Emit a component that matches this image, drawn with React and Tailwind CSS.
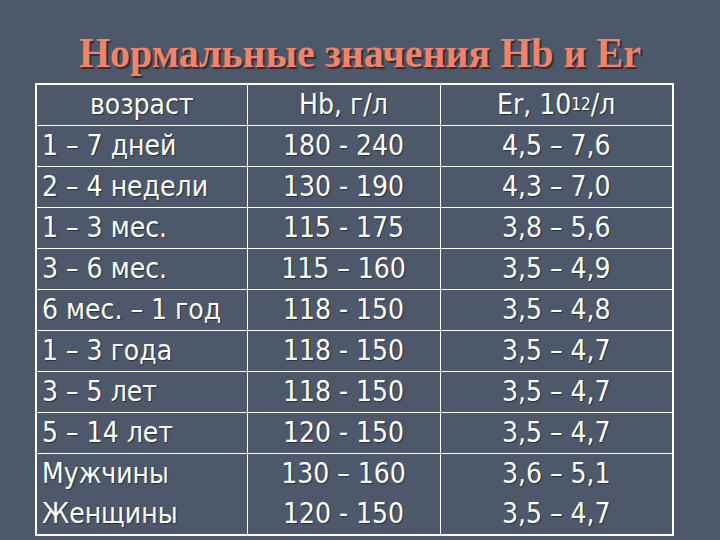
import React from "react";

const rows = [
  ["1 – 7 дней", "180 - 240", "4,5 – 7,6"],
  ["2 – 4 недели", "130 - 190", "4,3 – 7,0"],
  ["1 – 3 мес.", "115 - 175", "3,8 – 5,6"],
  ["3 – 6 мес.", "115 – 160", "3,5 – 4,9"],
  ["6 мес. – 1 год", "118 - 150", "3,5 – 4,8"],
  ["1 – 3 года", "118 - 150", "3,5 – 4,7"],
  ["3 – 5 лет", "118 - 150", "3,5 – 4,7"],
  ["5 – 14 лет", "120 - 150", "3,5 – 4,7"],
  ["Мужчины", "130 – 160", "3,6 – 5,1"],
  ["Женщины", "120 - 150", "3,5 – 4,7"],
];

export default function App() {
  const cell = "h-[41px] p-0 align-middle";
  return (
    <div className="w-[720px] h-[540px] bg-[#4d596b] overflow-hidden">
      {/* Title */}
      <div className="h-[83px] flex items-center justify-center pt-[22px]">
        <h1 className="font-['Liberation_Serif',serif] font-bold text-[40px] leading-none text-[#f2836b] scale-y-[1.08] [text-shadow:2px_2px_1px_#2e2e36]">
          Нормальные значения Hb и Er
        </h1>
      </div>

      {/* Table */}
      <div className="pl-[35px]">
        <table className="w-[637px] border-collapse border-2 border-white text-white font-['DejaVu_Sans_Condensed','DejaVu_Sans',sans-serif] text-[28px] leading-none [text-shadow:1px_1px_1px_#2a2f38] table-fixed">
          <colgroup>
            <col className="w-[211px]" />
            <col className="w-[193px]" />
            <col className="w-[233px]" />
          </colgroup>
          <thead>
            <tr className="border-b border-white">
              <th className={`${cell} font-normal text-center border-r border-white`}>возраст</th>
              <th className={`${cell} font-normal text-center border-r border-white`}>Hb, г/л</th>
              <th className={`${cell} font-normal text-center`}>
                Er, 10<sup className="text-[17px] relative -top-[4px]">12</sup>/л
              </th>
            </tr>
          </thead>
          <tbody>
            {rows.map((r, i) => (
              <tr key={i} className={i < 8 ? "border-b border-white" : ""}>
                <td className={`${cell} pl-[5px] text-left border-r border-white whitespace-nowrap`}>{r[0]}</td>
                <td className={`${cell} text-center border-r border-white`}>{r[1]}</td>
                <td className={`${cell} text-center`}>{r[2]}</td>
              </tr>
            ))}
          </tbody>
        </table>
      </div>
    </div>
  );
}
